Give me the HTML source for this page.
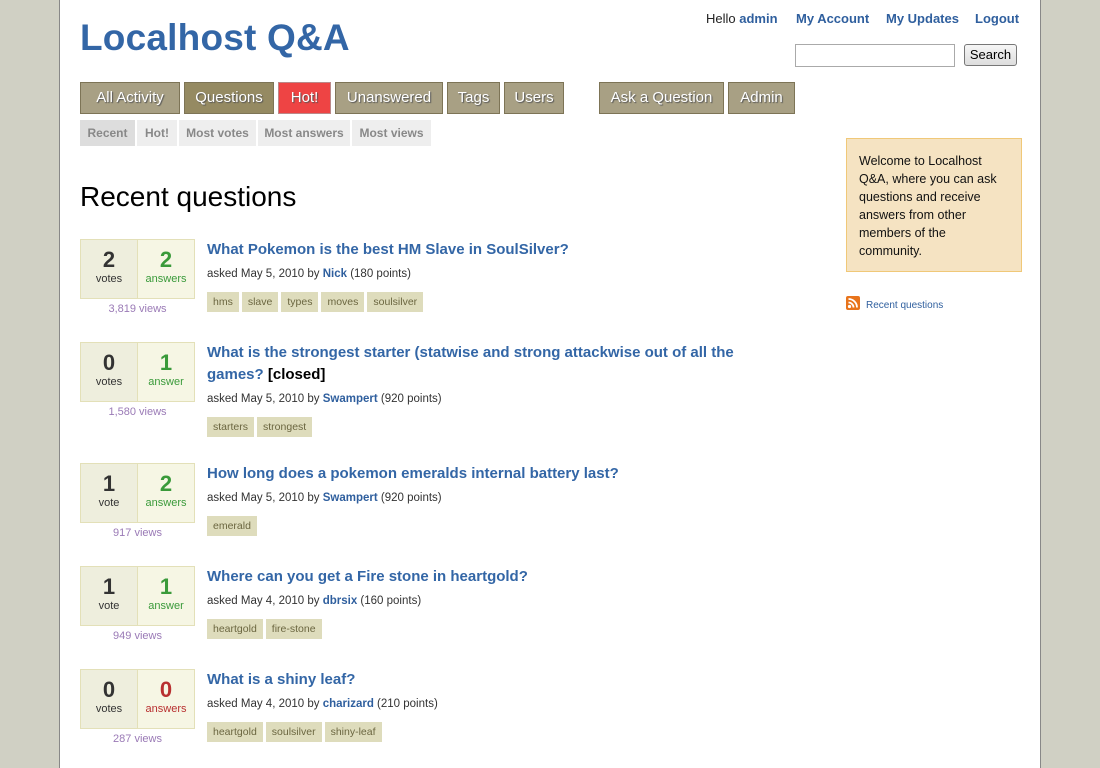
<!DOCTYPE html>
<html><head><meta charset="utf-8"><style>
*{margin:0;padding:0;box-sizing:border-box}
body{width:1100px;height:768px;background:#d0d0c4;font-family:"Liberation Sans",sans-serif;position:relative;overflow:hidden}
#page{position:absolute;left:59px;top:0;width:982px;height:768px;background:#fff;border-left:1px solid #888;border-right:1px solid #888}
.a{position:absolute;white-space:nowrap}
.logo{left:80px;top:17px;font-size:37px;font-weight:bold;color:#3366a6;letter-spacing:0.2px}
.top{top:11px;font-size:13px;color:#222}
.top b{color:#2f5f9e}
.nav{top:82px;height:32px;background:#a8a084;border:1px solid #7d7456;color:#fff;font-size:15px;line-height:30px;text-align:center;text-shadow:1px 1px 1px #555}
.sub{top:120px;height:26px;background:#eee;color:#888;font-size:12px;font-weight:bold;line-height:26px;text-align:center}
h1{position:absolute;left:80px;top:181px;font-size:28px;font-weight:normal;color:#000}
.box{position:absolute;left:80px;width:115px;height:60px;border:1px solid #e3e0b8}
.v,.an{position:absolute;top:0;height:58px;text-align:center}
.v{left:0;width:57px;background:#eeeedd;border-right:1px solid #e3e0b8;color:#333}
.an{left:57px;width:56px;background:#f6f6e4;color:#3a9a3a}
.n{font-size:22px;font-weight:bold;margin-top:8px;line-height:24px}
.l{font-size:11px;line-height:14px}
.views{position:absolute;left:80px;width:115px;text-align:center;font-size:11px;color:#9a7ab6}
.t{position:absolute;left:207px;font-size:15px;font-weight:bold;color:#3366a6;line-height:22px;width:575px}
.t span{color:#000}
.m{position:absolute;left:207px;font-size:11.5px;color:#333}
.m b{color:#2f5f9e}
.tags{position:absolute;left:207px;height:20px}
.tags span{display:inline-block;background:#dedcbc;color:#6b6640;font-size:10.5px;line-height:20px;padding:0 6px;margin-right:3px}
.welcome{left:846px;top:138px;width:176px;height:134px;background:#f5e3c2;border:1px solid #f0c878;padding:13px 12px;font-size:12.5px;line-height:18px;color:#111;white-space:normal}
</style></head><body>
<div id="page"></div>
<div class="a logo">Localhost Q&amp;A</div>
<div class="a top" style="left:706px">Hello <b>admin</b></div>
<div class="a top" style="left:796px"><b>My Account</b></div>
<div class="a top" style="left:886px"><b>My Updates</b></div>
<div class="a top" style="left:975px"><b>Logout</b></div>
<div class="a" style="left:795px;top:44px;width:160px;height:23px;border:1px solid #aaa"></div>
<div class="a" style="left:964px;top:44px;width:53px;height:22px;border:1px solid #777;border-radius:3px;background:linear-gradient(#f6f6f6,#ddd);font-size:13px;line-height:20px;text-align:center">Search</div>

<div class="a nav" style="left:80px;width:100px">All Activity</div>
<div class="a nav" style="left:184px;width:90px;background:#958a62">Questions</div>
<div class="a nav" style="left:278px;width:53px;background:#ee4444;border-color:#b88">Hot!</div>
<div class="a nav" style="left:335px;width:108px">Unanswered</div>
<div class="a nav" style="left:447px;width:53px">Tags</div>
<div class="a nav" style="left:504px;width:60px">Users</div>
<div class="a nav" style="left:599px;width:125px">Ask a Question</div>
<div class="a nav" style="left:728px;width:67px">Admin</div>

<div class="a sub" style="left:80px;width:55px;background:#ddd">Recent</div>
<div class="a sub" style="left:137px;width:40px">Hot!</div>
<div class="a sub" style="left:179px;width:77px">Most votes</div>
<div class="a sub" style="left:258px;width:92px">Most answers</div>
<div class="a sub" style="left:352px;width:79px">Most views</div>

<h1>Recent questions</h1>

<div class="box" style="top:239px"><div class="v"><div class="n">2</div><div class="l">votes</div></div><div class="an"><div class="n">2</div><div class="l">answers</div></div></div>
<div class="views" style="top:303px">3,819 views</div>
<div class="t" style="top:239px">What Pokemon is the best HM Slave in SoulSilver?</div>
<div class="m" style="top:268px">asked May 5, 2010 by <b>Nick</b> (180 points)</div>
<div class="tags" style="top:292px"><span>hms</span><span>slave</span><span>types</span><span>moves</span><span>soulsilver</span></div>

<div class="box" style="top:342px"><div class="v"><div class="n">0</div><div class="l">votes</div></div><div class="an"><div class="n">1</div><div class="l">answer</div></div></div>
<div class="views" style="top:406px">1,580 views</div>
<div class="t" style="top:342px">What is the strongest starter (statwise and strong attackwise out of all the games? <span>[closed]</span></div>
<div class="m" style="top:393px">asked May 5, 2010 by <b>Swampert</b> (920 points)</div>
<div class="tags" style="top:417px"><span>starters</span><span>strongest</span></div>

<div class="box" style="top:463px"><div class="v"><div class="n">1</div><div class="l">vote</div></div><div class="an"><div class="n">2</div><div class="l">answers</div></div></div>
<div class="views" style="top:527px">917 views</div>
<div class="t" style="top:463px">How long does a pokemon emeralds internal battery last?</div>
<div class="m" style="top:492px">asked May 5, 2010 by <b>Swampert</b> (920 points)</div>
<div class="tags" style="top:516px"><span>emerald</span></div>

<div class="box" style="top:566px"><div class="v"><div class="n">1</div><div class="l">vote</div></div><div class="an"><div class="n">1</div><div class="l">answer</div></div></div>
<div class="views" style="top:630px">949 views</div>
<div class="t" style="top:566px">Where can you get a Fire stone in heartgold?</div>
<div class="m" style="top:595px">asked May 4, 2010 by <b>dbrsix</b> (160 points)</div>
<div class="tags" style="top:619px"><span>heartgold</span><span>fire-stone</span></div>

<div class="box" style="top:669px"><div class="v"><div class="n">0</div><div class="l">votes</div></div><div class="an" style="color:#b83030"><div class="n">0</div><div class="l">answers</div></div></div>
<div class="views" style="top:733px">287 views</div>
<div class="t" style="top:669px">What is a shiny leaf?</div>
<div class="m" style="top:698px">asked May 4, 2010 by <b>charizard</b> (210 points)</div>
<div class="tags" style="top:722px"><span>heartgold</span><span>soulsilver</span><span>shiny-leaf</span></div>

<div class="a welcome">Welcome to Localhost Q&amp;A, where you can ask questions and receive answers from other members of the community.</div>
<svg class="a" style="left:846px;top:296px" width="14" height="14" viewBox="0 0 14 14"><rect width="14" height="14" rx="2" fill="#e8741c"/><circle cx="3.5" cy="10.5" r="1.6" fill="#fff"/><path d="M2.5 6.5a5 5 0 0 1 5 5M2.5 3a8.5 8.5 0 0 1 8.5 8.5" stroke="#fff" stroke-width="1.8" fill="none"/></svg>
<div class="a" style="left:866px;top:300px;font-size:10px;color:#2f5f9e">Recent questions</div>
</body></html>
